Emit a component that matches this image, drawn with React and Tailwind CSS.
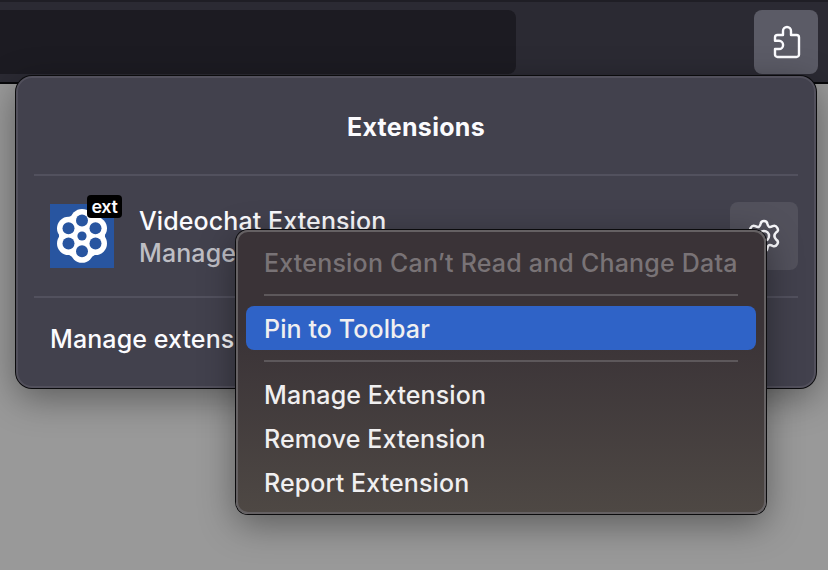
const rule = "h-[2px] shrink-0";

function PuzzleIcon() {
  return (
    <svg width="30" height="36" viewBox="771 24 30 36" fill="none" stroke="#fbfbfe" strokeWidth="2.4" strokeLinecap="round" strokeLinejoin="round">
      <path d="M775 40.8V37.5a2.5 2.5 0 0 1 2.5-2.5H783V31a4 4 0 0 1 8 0V35H796.500a2.500 2.500 0 0 1 2.500 2.500V54.500a2.500 2.500 0 0 1-2.500 2.500H777.500a2.500 2.500 0 0 1-2.500-2.500V49H779a4.100 4.100 0 0 0 0-8.200Z" />
    </svg>
  );
}

function GearIcon() {
  return (
    <svg width="34" height="34" viewBox="-17 -17 34 34" fill="none" stroke="#fbfbfe" strokeWidth="2.5" strokeLinejoin="round">
      <circle r="5" />
      <path d="M-3.400-12.200Q-3-15 0-15T3.400-12.200C4-9 5.500-8.200 8.600-9.800Q11.500-11.200 13.300-8.200T12.200-3.600Q8.600 0 12.200 3.600Q15 5.200 13.300 8.200T8.600 9.800C5.500 8.200 4 9 3.400 12.200Q3 15 0 15T-3.400 12.200C-4 9-5.500 8.200-8.600 9.800Q-11.500 11.200-13.300 8.200T-12.200 3.600Q-8.600 0-12.200-3.600Q-15-5.200-13.300-8.200T-8.600-9.800C-5.500-8.200-4-9-3.400-12.200Z" />
    </svg>
  );
}

const cells = [[32, 16.5], [45.500, 24.300], [45.500, 39.500], [32, 47.300], [18.500, 39.500], [18.500, 24.300]];

function ExtensionLogo() {
  return (
    <svg width="64" height="64" viewBox="0 0 64 64">
      <rect width="64" height="64" fill="#2855a0" />
      <g fill="#fff">
        <circle cx="32" cy="32" r="23" />
        {cells.map(([x, y]) => <circle key={`${x},${y}`} cx={x} cy={y} r="11.500" />)}
      </g>
      <g fill="#2855a0">
        <circle cx="32" cy="32" r="4.600" />
        {cells.map(([x, y]) => <circle key={`${x},${y}`} cx={x} cy={y} r="6" />)}
      </g>
    </svg>
  );
}

function MenuItem({ children, className = "" }) {
  return <div className={`mx-2 flex h-11 items-center rounded-lg px-[18px] pt-[3px] ${className}`}>{children}</div>;
}

function MenuSeparator() {
  return <div className={`${rule} mx-[26px] my-[10px] bg-[#5d585b]`} />;
}

export default function App() {
  return (
    <div className="relative h-[570px] w-[828px] overflow-hidden whitespace-nowrap bg-[#999] font-['Inter',sans-serif] text-[25px] font-[450] tracking-[0.1px] text-[#fbfbfe]">
      <header className="flex h-[84px] items-start justify-between border-t-2 border-b-2 border-t-[#1f1e25] border-b-[#08080a] bg-[#2b2a33] pt-2 pr-[10px]">
        <div className="h-16 w-[516px] rounded-r-lg bg-[#1c1b22]" />
        <div className="flex h-16 w-16 items-center justify-center rounded-lg bg-[#5b5b66]">
          <PuzzleIcon />
        </div>
      </header>

      <section className="absolute top-[76px] left-4 flex h-[312px] w-[800px] flex-col rounded-[16px] border-2 border-[#52505c] bg-[#42414d] px-4 shadow-[0_0_0_1px_#0b0b0d,0_10px_36px_rgba(0,0,0,0.4)]">
        <h1 className="flex h-24 items-center justify-center pt-1 text-[25px] font-bold tracking-[0.3px]">Extensions</h1>
        <div className={`${rule} bg-[#52515e]`} />
        <div className="flex h-[120px] items-center pl-4">
          <div className="relative">
            <ExtensionLogo />
            <span className="absolute -top-[9px] left-[37px] flex h-[23px] w-[35px] items-center justify-center rounded bg-black text-[18px] font-semibold tracking-[-0.3px]">ext</span>
          </div>
          <div className="flex flex-1 flex-col pt-[2px] pl-[25px] leading-8">
            <span>Videochat Extension</span>
            <span className="text-[#bebec4]">Manage</span>
          </div>
          <div className="flex h-[68px] w-[68px] items-center justify-center rounded-lg bg-[#52515c]">
            <GearIcon />
          </div>
        </div>
        <div className={`${rule} bg-[#52515e]`} />
        <div className="flex h-[84px] items-center pl-4 font-medium">Manage extensions</div>
      </section>

      <div className="absolute top-[230px] left-[236px] h-[284px] w-[530px] rounded-xl border-2 border-[#656163] bg-linear-to-b from-[#3a3337] from-35% to-[#4e4844] py-2 text-[#f0eff0] shadow-[0_0_0_1px_#0b0b0d,0_10px_36px_rgba(0,0,0,0.4)]">
        <MenuItem className="tracking-[0.2px] text-[#797376]">Extension Can’t Read and Change Data</MenuItem>
        <MenuSeparator />
        <MenuItem className="bg-[#2f63c7]">Pin to Toolbar</MenuItem>
        <MenuSeparator />
        <MenuItem>Manage Extension</MenuItem>
        <MenuItem>Remove Extension</MenuItem>
        <MenuItem>Report Extension</MenuItem>
      </div>
    </div>
  );
}
